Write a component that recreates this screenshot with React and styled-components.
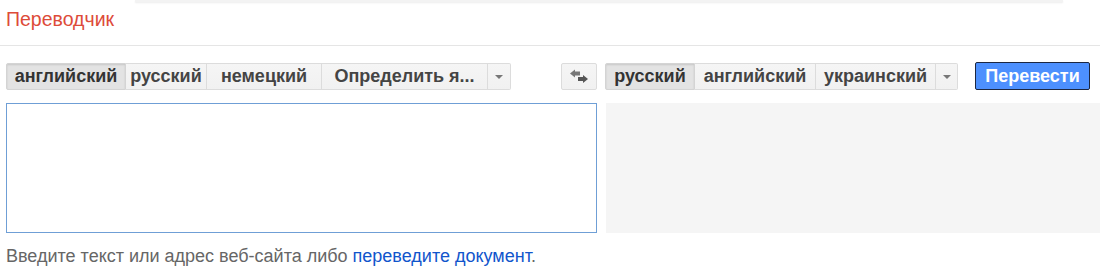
import React from "react";
import styled, { createGlobalStyle, css } from "styled-components";

const Global = createGlobalStyle`
  html, body { margin: 0; padding: 0; background: #fff; }
  body { font-family: "Liberation Sans", Arial, sans-serif; }
`;

const Page = styled.div`
  width: 1100px;
  height: 272px;
  overflow: hidden;
  background: #fff;
`;

const TopStrip = styled.div`
  margin-left: 135px;
  width: 928px;
  height: 2px;
  background: #f3f3f3;
  box-shadow: 0 1px 2px rgba(0, 0, 0, 0.08);
`;

const Header = styled.div`
  height: 44px;
  border-bottom: 1px solid #e5e5e5;
  box-sizing: border-box;
  padding: 5px 0 0 6px;
`;

const Title = styled.div`
  color: #dd4b39;
  font-size: 19.5px;
  line-height: 24px;
`;

const Toolbar = styled.div`
  display: flex;
  align-items: center;
  margin-top: 17px;
  padding-left: 6px;
  height: 27px;
`;

const Group = styled.div`
  display: flex;
  height: 27px;
`;

const LangButton = styled.div`
  width: ${(p) => p.$w}px;
  height: 27px;
  box-sizing: border-box;
  display: flex;
  align-items: center;
  justify-content: center;
  font-size: 18px;
  font-weight: bold;
  color: #444;
  border: 1px solid #dcdcdc;
  border-left-width: 0;
  background: linear-gradient(#f5f5f5, #f1f1f1);
  white-space: nowrap;
  &:first-child { border-left-width: 1px; border-radius: 2px 0 0 2px; }
  &:last-child { border-radius: 0 2px 2px 0; }
  ${(p) =>
    p.$selected &&
    css`
      background: #e3e3e3;
      color: #333;
      box-shadow: inset 0 1px 2px rgba(0, 0, 0, 0.12);
      border-color: #d4d4d4;
    `}
`;

const Caret = styled.span`
  width: 0;
  height: 0;
  border-left: 4px solid transparent;
  border-right: 4px solid transparent;
  border-top: 4px solid #777;
  margin-top: 1px;
`;

const SwapButton = styled.div`
  width: 36px;
  height: 27px;
  box-sizing: border-box;
  border: 1px solid #dcdcdc;
  border-radius: 2px;
  background: linear-gradient(#f5f5f5, #f1f1f1);
  display: flex;
  align-items: center;
  justify-content: center;
  margin-left: 50px;
  margin-right: 8px;
`;

const TranslateButton = styled.div`
  margin-left: 17px;
  margin-top: -1px;
  height: 28px;
  width: 115px;
  box-sizing: border-box;
  border: 1px solid #1c2741;
  border-radius: 2px;
  background: #4d90fe;
  color: #fff;
  font-weight: bold;
  font-size: 18px;
  display: flex;
  align-items: center;
  justify-content: center;
`;

const Panels = styled.div`
  display: flex;
  margin-top: 13px;
  padding-left: 6px;
  height: 130px;
`;

const Source = styled.div`
  width: 591px;
  box-sizing: border-box;
  border: 1px solid #6f9fd6;
  background: #fff;
`;

const Result = styled.div`
  flex: 1;
  margin-left: 9px;
  background: #f5f5f5;
`;

const Hint = styled.div`
  padding: 12px 0 0 6px;
  font-size: 18px;
  line-height: 22px;
  color: #666;
`;

const Link = styled.span`
  color: #1155cc;
`;

const SwapIcon = () => (
  <svg width="20" height="15" viewBox="0 0 20 15">
    <path d="M6 0.5 L1 4.5 L6 8.5 V6.5 H11 V2.5 H6 Z" fill="#777" />
    <path d="M14 6 L19 10 L14 14 V12 H9 V8 H14 Z" fill="#555" />
  </svg>
);

export default function App() {
  return (
    <Page>
      <Global />
      <TopStrip />
      <Header>
        <Title>Переводчик</Title>
      </Header>
      <Toolbar>
        <Group>
          <LangButton $selected $w={120}>английский</LangButton>
          <LangButton $w={81}>русский</LangButton>
          <LangButton $w={115}>немецкий</LangButton>
          <LangButton $w={166}>Определить я...</LangButton>
          <LangButton $w={23}><Caret /></LangButton>
        </Group>
        <SwapButton><SwapIcon /></SwapButton>
        <Group>
          <LangButton $selected $w={90}>русский</LangButton>
          <LangButton $w={121}>английский</LangButton>
          <LangButton $w={120}>украинский</LangButton>
          <LangButton $w={22}><Caret /></LangButton>
        </Group>
        <TranslateButton>Перевести</TranslateButton>
      </Toolbar>
      <Panels>
        <Source />
        <Result />
      </Panels>
      <Hint>
        Введите текст или адрес веб-сайта либо <Link>переведите документ</Link>.
      </Hint>
    </Page>
  );
}
